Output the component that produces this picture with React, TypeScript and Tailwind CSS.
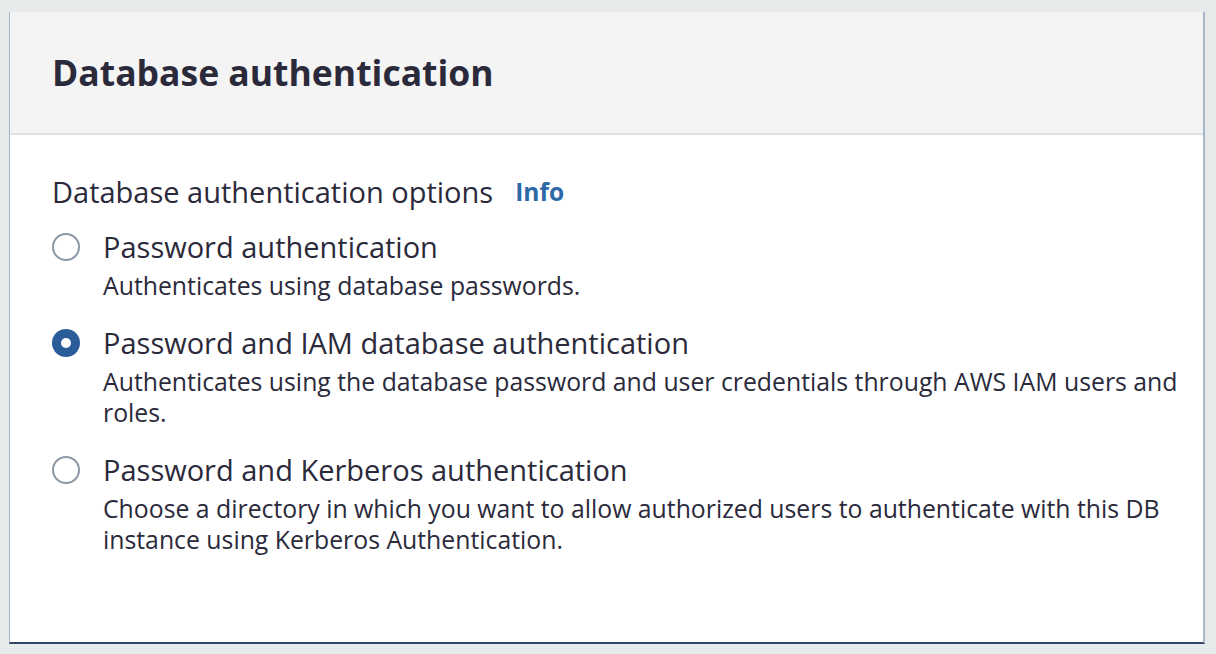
import React, { useState } from 'react';

interface AuthOption {
  id: string;
  title: string;
  description: string;
}

const options: AuthOption[] = [
  {
    id: 'password',
    title: 'Password authentication',
    description: 'Authenticates using database passwords.'
  },
  {
    id: 'iam',
    title: 'Password and IAM database authentication',
    description:
      'Authenticates using the database password and user credentials through AWS IAM users and roles.'
  },
  {
    id: 'kerberos',
    title: 'Password and Kerberos authentication',
    description:
      'Choose a directory in which you want to allow authorized users to authenticate with this DB instance using Kerberos Authentication.'
  }
];

const Radio: React.FC<{ checked: boolean }> = ({ checked }) =>
  checked ? (
    <span className="flex h-[28px] w-[28px] shrink-0 items-center justify-center rounded-full bg-[#2b5c9a]">
      <span className="h-[10px] w-[10px] rounded-full bg-white" />
    </span>
  ) : (
    <span className="h-[28px] w-[28px] shrink-0 rounded-full border-2 border-[#8b98a7] bg-white" />
  );

export default function App() {
  const [selected, setSelected] = useState('iam');

  return (
    <div
      className="min-h-screen bg-[#e7eaeb] pt-[12px] pl-[9px] pr-[11px] text-[#2b2a3b]"
      style={{ fontFamily: '"Open Sans", "Noto Sans", sans-serif' }}
    >
      <div className="h-[632px] border-l border-r-2 border-b-2 border-l-[#a9b6c4] border-r-[#a9b8c9] border-b-[#34456a] bg-white">
        <div className="flex h-[123px] items-center border-b-2 border-[#e0e3e4] bg-[#f4f4f4] px-[42px]">
          <h2 className="text-[35.5px] font-bold leading-none">Database authentication</h2>
        </div>

        <div className="pl-[42px] pr-[20px] pt-[40px]">
          <div className="flex items-center gap-[22px] text-[29px] leading-[34px]">
            <span>Database authentication options</span>
            <span className="text-[24.5px] font-bold text-[#2d69a6]">Info</span>
          </div>

          <div className="mt-[18px] flex flex-col gap-[22px]">
            {options.map((opt) => (
              <label
                key={opt.id}
                className="flex cursor-pointer items-start gap-[23px]"
                onClick={() => setSelected(opt.id)}
              >
                <div className="flex h-[40px] items-center">
                  <Radio checked={selected === opt.id} />
                </div>
                <div className="flex flex-col gap-[3px]">
                  <span className="text-[29px] leading-[40px]">{opt.title}</span>
                  <span className="text-[24.8px] leading-[31px]">{opt.description}</span>
                </div>
              </label>
            ))}
          </div>
        </div>
      </div>
    </div>
  );
}
